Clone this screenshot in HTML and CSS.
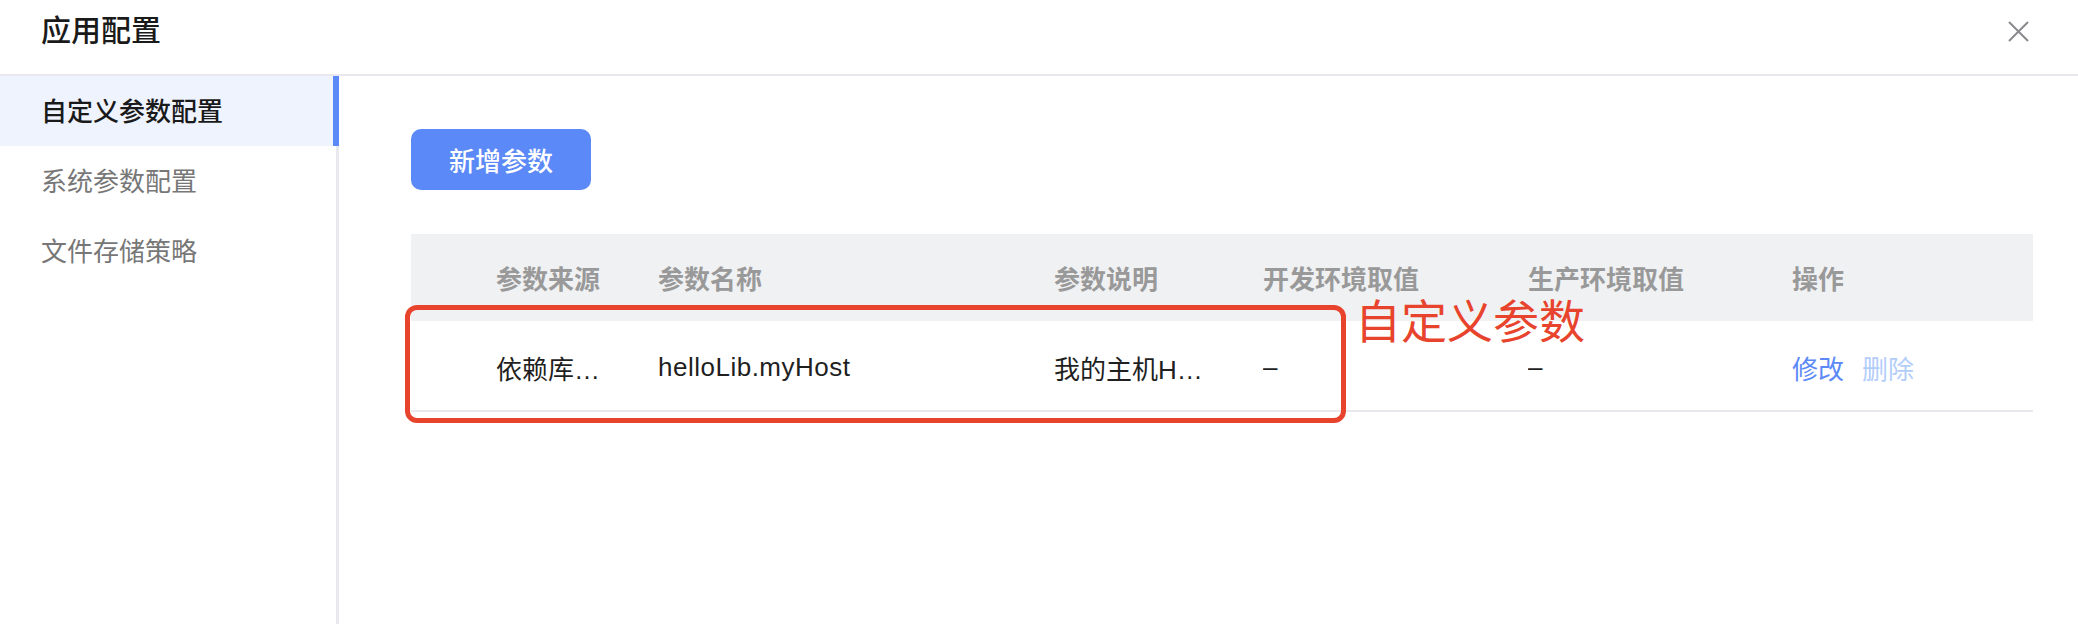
FILE: index.html
```html
<!DOCTYPE html>
<html lang="zh-CN">
<head>
<meta charset="utf-8">
<title>应用配置</title>
<link rel="stylesheet" href="styles.css">
</head>
<body>
<div class="dialog">
  <header class="dialog-header">
    <h1 class="dialog-title">应用配置</h1>
    <button class="close-btn" aria-label="关闭">
      <svg width="21" height="21" viewBox="0 0 21 21"><path d="M1 1 L20 20 M20 1 L1 20" stroke="#8a8a8e" stroke-width="2" fill="none"/></svg>
    </button>
  </header>
  <div class="dialog-body">
    <nav class="sidebar">
      <div class="nav-item active">自定义参数配置</div>
      <div class="nav-item">系统参数配置</div>
      <div class="nav-item">文件存储策略</div>
    </nav>
    <main class="content">
      <button class="primary-btn">新增参数</button>
      <div class="table">
        <div class="row head">
          <div class="cell first">参数来源</div>
          <div class="cell">参数名称</div>
          <div class="cell">参数说明</div>
          <div class="cell">开发环境取值</div>
          <div class="cell">生产环境取值</div>
          <div class="cell">操作</div>
        </div>
        <div class="row body-row">
          <div class="cell first">依赖库…</div>
          <div class="cell latin">helloLib.myHost</div>
          <div class="cell">我的主机H…</div>
          <div class="cell">–</div>
          <div class="cell">–</div>
          <div class="cell actions"><span class="link">修改</span><span class="link disabled">删除</span></div>
        </div>
      </div>
    </main>
  </div>
  <div class="annot-box"></div>
  <div class="annot-text">自定义参数</div>
</div>
</body>
</html>
```

FILE: styles.css
```css
* { box-sizing: border-box; }
html, body { margin: 0; padding: 0; background: #fff; }
body {
  font-family: "Liberation Sans", "Noto Sans CJK SC", sans-serif;
  color: #1f1f1f;
  width: 2078px;
  height: 624px;
  overflow: hidden;
}
.dialog { position: relative; height: 624px; display: flex; flex-direction: column; }
.dialog-header {
  height: 76px;
  border-bottom: 2px solid #e8e8ee;
  display: flex;
  align-items: flex-start;
  justify-content: space-between;
  padding: 15px 49px 0 41px;
  flex-shrink: 0;
}
.dialog-title {
  margin: 0;
  font-size: 30px;
  line-height: 32px;
  font-weight: 500;
  color: #1a1a1a;
}
.close-btn {
  border: 0;
  background: none;
  padding: 0;
  margin-top: 6px;
  width: 21px;
  height: 21px;
  display: block;
}
.close-btn svg { display: block; }
.dialog-body { flex: 1; display: flex; }
.sidebar {
  width: 339px;
  border-right: 3px solid #e8e8ee;
  flex-shrink: 0;
}
.nav-item {
  height: 70px;
  line-height: 70px;
  padding-left: 41px;
  padding-top: 1px;
  font-size: 26px;
  color: #777;
}
.nav-item.active {
  background: #eef3fd;
  color: #1a1a1a;
  font-weight: 500;
  margin-right: -3px;
  box-shadow: inset -6px 0 0 #5b89f7;
}
.content {
  flex: 1;
  padding: 53px 45px 0 72px;
}
.primary-btn {
  display: block;
  width: 180px;
  height: 61px;
  border: 0;
  border-radius: 10px;
  background: #5b89f7;
  color: #fff;
  font-family: inherit;
  font-size: 26px;
  font-weight: 500;
  padding: 0;
}
.table { margin-top: 44px; width: 1622px; }
.row {
  display: grid;
  grid-template-columns: 247px 396px 209px 265px 264px 241px;
  align-items: center;
  font-size: 26px;
}
.row.head {
  height: 87px;
  background: #f0f1f3;
  color: #999;
  font-weight: 700;
}
.row.body-row {
  height: 91px;
  padding-top: 4px;
  border-bottom: 2px solid #e8e8ee;
  color: #1f1f1f;
}
.cell { white-space: nowrap; overflow: hidden; }
.cell.first { padding-left: 85px; }
.cell.latin { letter-spacing: 0.5px; }
.actions { display: flex; gap: 18px; }
.link { color: #5b89f7; }
.link.disabled { color: #b3cdfb; }
.annot-box {
  position: absolute;
  left: 405px;
  top: 305px;
  width: 941px;
  height: 118px;
  border: 5px solid #e8432d;
  border-radius: 12px;
}
.annot-text {
  position: absolute;
  left: 1355px;
  top: 296px;
  font-size: 46px;
  line-height: 52px;
  color: #e8432d;
}
```
